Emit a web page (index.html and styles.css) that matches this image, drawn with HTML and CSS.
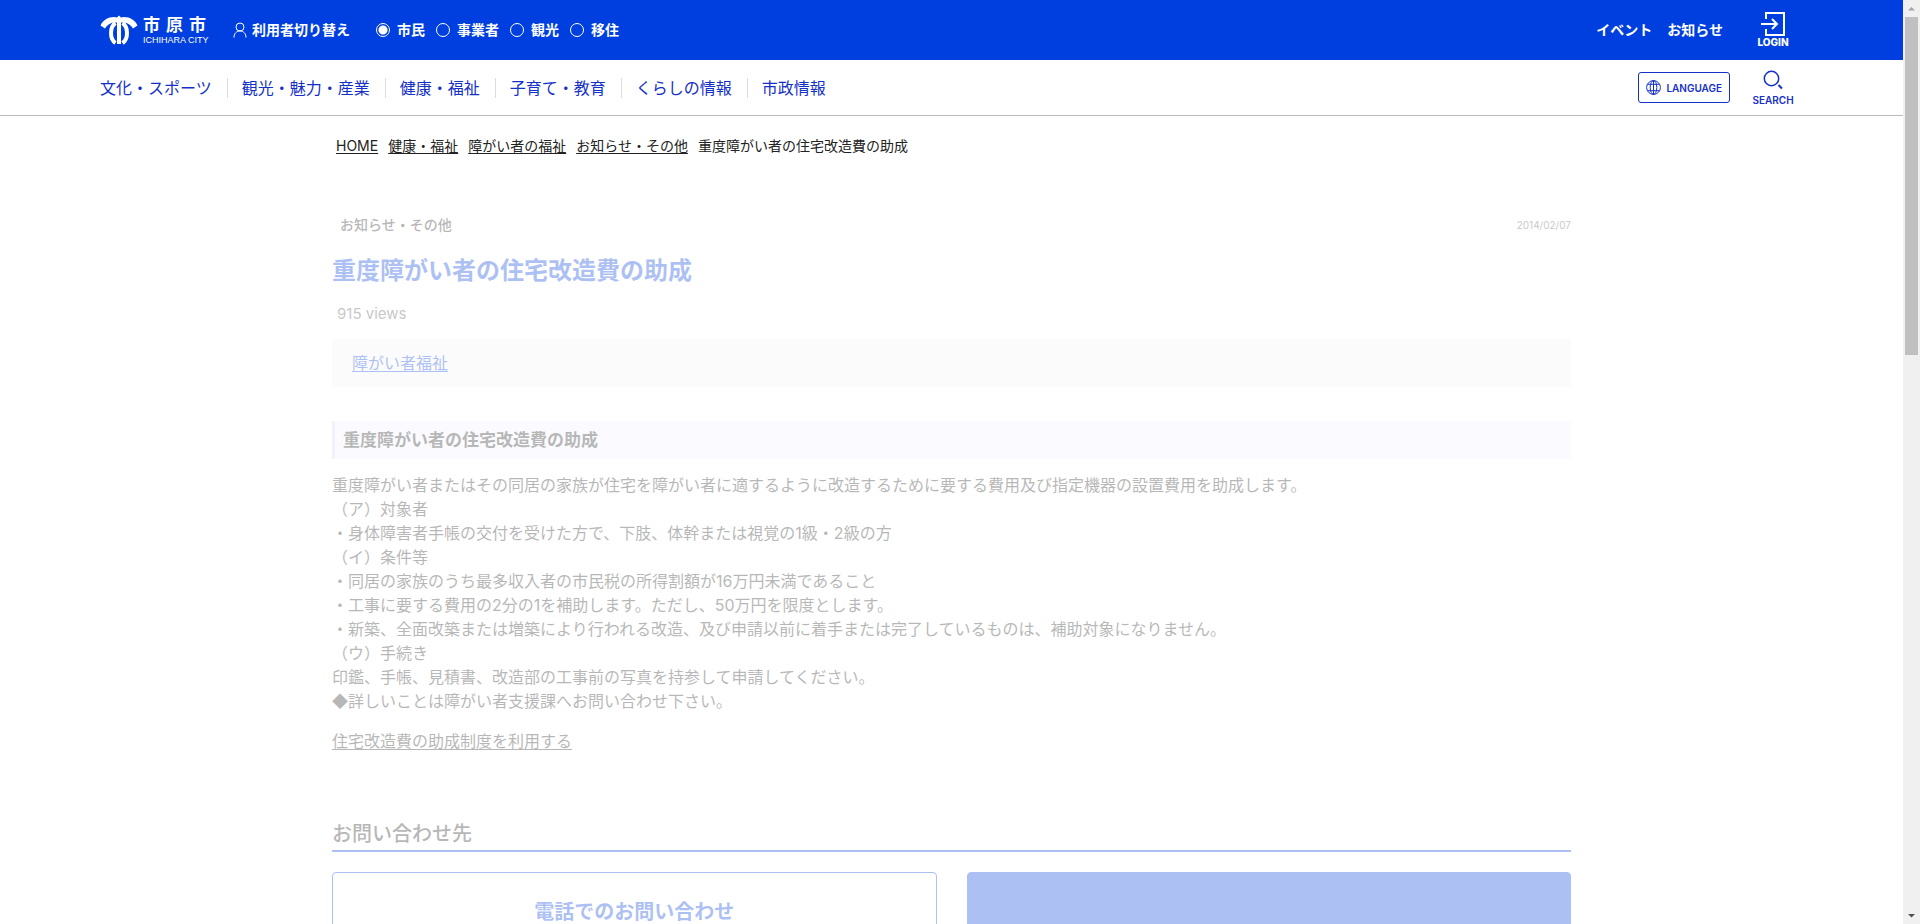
FILE: index.html
```html
<!DOCTYPE html>
<html lang="ja">
<head>
<meta charset="utf-8">
<meta name="viewport" content="width=device-width, initial-scale=1">
<title>重度障がい者の住宅改造費の助成</title>
<link rel="stylesheet" href="styles.css">
</head>
<body>
<header>
  <div class="topbar">
    <a class="logo" href="#">
      <svg class="logo-mark" viewBox="0 0 38 30" aria-hidden="true">
        <path d="M0.500 10.500C3 5 8 2 14 2l3 .5L19 .5l2 2L24 2c6 0 11 3 13.500 8.500l-4.500 3C31 10 28 8 24.500 7.500h-11C10 8 7 10 5 13.500z" fill="#fff"/>
        <path d="M15.500 8C9.500 12 9.500 24 15.500 28M22.500 8c6 4 6 16 0 20" fill="none" stroke="#fff" stroke-width="4"/>
        <path d="M17 5h4v24h-4z" fill="#fff"/>
      </svg>
      <span class="logo-text">
        <span class="logo-ja"><span>市</span><span>原</span><span>市</span></span>
        <span class="logo-en">ICHIHARA CITY</span>
      </span>
    </a>
    <form class="switcher">
      <span class="switcher-title">
        <svg class="user-icon" viewBox="0 0 14 16" aria-hidden="true"><circle cx="7" cy="5" r="4"/><path d="M1 15.500C1 11.500 3.500 9 7 9s6 2.500 6 6.500"/></svg>
        利用者切り替え
      </span>
      <span class="options">
        <label><input type="radio" name="user" checked>市民</label>
        <label><input type="radio" name="user">事業者</label>
        <label><input type="radio" name="user">観光</label>
        <label><input type="radio" name="user">移住</label>
      </span>
    </form>
    <div class="top-links">
      <a href="#">イベント</a>
      <a href="#">お知らせ</a>
    </div>
    <a class="tool login" href="#">
      <svg class="login-icon" viewBox="0 0 24 24" aria-hidden="true"><path d="M5 7V1h18v22H5v-6M0 12h16M11 7l5 5-5 5"/></svg>
      LOGIN
    </a>
  </div>
  <div class="navbar">
    <nav class="menu">
      <a href="#">文化・スポーツ</a>
      <a href="#">観光・魅力・産業</a>
      <a href="#">健康・福祉</a>
      <a href="#">子育て・教育</a>
      <a href="#">くらしの情報</a>
      <a href="#">市政情報</a>
    </nav>
    <button class="language" type="button">
      <svg class="globe-icon" viewBox="0 0 15 15" aria-hidden="true"><circle cx="7.500" cy="7.500" r="6.900"/><ellipse cx="7.500" cy="7.500" rx="3.300" ry="6.900"/><path d="M7.500.5v14M1.500 4.300h12M1.500 10.700h12"/></svg>
      LANGUAGE
    </button>
    <button class="tool search" type="button">
      <svg class="search-icon" viewBox="0 0 20 20" aria-hidden="true"><circle cx="8.500" cy="8.500" r="7.200"/><path d="M15.500 15l3.500 3.500" stroke-width="2"/></svg>
      SEARCH
    </button>
  </div>
</header>
<div class="container">
  <nav class="breadcrumb">
    <a href="#">HOME</a>
    <a href="#">健康・福祉</a>
    <a href="#">障がい者の福祉</a>
    <a href="#">お知らせ・その他</a>
    <span>重度障がい者の住宅改造費の助成</span>
  </nav>
  <main class="article">
    <div class="meta"><span class="category">お知らせ・その他</span><time datetime="2014-02-07">2014/02/07</time></div>
    <h1>重度障がい者の住宅改造費の助成</h1>
    <p class="views">915 views</p>
    <div class="tags"><a href="#">障がい者福祉</a></div>
    <h2>重度障がい者の住宅改造費の助成</h2>
    <p class="body-text">重度障がい者またはその同居の家族が住宅を障がい者に適するように改造するために要する費用及び指定機器の設置費用を助成します。<br>
（ア）対象者<br>
・身体障害者手帳の交付を受けた方で、下肢、体幹または視覚の1級・2級の方<br>
（イ）条件等<br>
・同居の家族のうち最多収入者の市民税の所得割額が16万円未満であること<br>
・工事に要する費用の2分の1を補助します。ただし、50万円を限度とします。<br>
・新築、全面改築または増築により行われる改造、及び申請以前に着手または完了しているものは、補助対象になりません。<br>
（ウ）手続き<br>
印鑑、手帳、見積書、改造部の工事前の写真を持参して申請してください。<br>
<span class="mark">◆</span>詳しいことは障がい者支援課へお問い合わせ下さい。</p>
    <p class="body-text"><a href="#">住宅改造費の助成制度を利用する</a></p>
    <h3>お問い合わせ先</h3>
    <div class="contacts">
      <section class="card"><h4>電話でのお問い合わせ</h4></section>
      <section class="card card-filled"></section>
    </div>
  </main>
</div>
<div class="scrollbar" aria-hidden="true">
  <svg viewBox="0 0 17 17"><path d="M5 10.500h7L8.500 7z" fill="#a3a3a3"/></svg>
  <div class="track"><div class="thumb"></div></div>
  <svg viewBox="0 0 17 17"><path d="M5 7h7l-3.500 3.500z" fill="#505050"/></svg>
</div>
</body>
</html>
```
FILE: styles.css
```css
* { box-sizing: border-box; }
html { overflow: hidden; }
body {
  margin: 0;
  padding-right: 17px;
  background: #fff;
  color: #222;
  font: 16px/24px Inter, "Noto Sans CJK JP", sans-serif;
}
h1, h2, h3, h4, p { margin: 0; }
button { border: 0; background: none; padding: 0; font-family: inherit; cursor: pointer; }
svg { flex: none; }

.topbar, .navbar { display: flex; align-items: center; padding: 0 100px; }
.topbar { height: 60px; background: #003fdf; color: #fff; font-size: 14px; font-weight: 700; }
.topbar a { color: #fff; text-decoration: none; }
.logo { display: flex; align-items: center; gap: 5px; }
.logo-mark { width: 38px; height: 30px; }
.logo-text { width: 63px; }
.logo-ja { display: flex; justify-content: space-between; font-size: 17px; line-height: 20px; }
.logo-en { display: block; font: 9px/10px "Liberation Sans", sans-serif; white-space: nowrap; }
.switcher { display: flex; align-items: center; gap: 26px; margin-left: 27px; }
.switcher-title { display: flex; align-items: center; gap: 5px; }
.user-icon { width: 14px; height: 16px; fill: none; stroke: #fff; }
.options { display: flex; gap: 11px; }
.options label { display: flex; align-items: center; gap: 7px; }
.options input {
  appearance: none;
  width: 14px;
  height: 14px;
  margin: 0;
  border: 1px solid #fff;
  border-radius: 50%;
}
.options input:checked { background: radial-gradient(circle, #fff 4px, transparent 5px); }
.top-links { display: flex; gap: 15px; margin: 0 20px 0 auto; }
.tool {
  display: flex;
  flex-direction: column;
  align-items: center;
  width: 60px;
  font-size: 10px;
  line-height: 12px;
}
.login { font-weight: 800; }
.login-icon { width: 24px; height: 24px; fill: none; stroke: #fff; stroke-width: 2; }

.navbar { height: 56px; border-bottom: 1px solid #bbb; }
.menu { display: flex; }
.menu a { padding: 0 15px 0 14px; color: #1430c8; line-height: 20px; text-decoration: none; }
.menu a:first-child { padding-left: 0; }
.menu a + a { border-left: 1px solid #ddd; }
.language {
  display: flex;
  align-items: center;
  gap: 5px;
  height: 31px;
  margin: 0 13px 0 auto;
  padding: 0 7px;
  border: 1px solid #1430c8;
  border-radius: 3px;
  color: #1430c8;
  font-size: 10px;
  font-weight: 600;
}
.globe-icon { width: 15px; height: 15px; fill: none; stroke: #1430c8; }
.search { gap: 4px; color: #1430c8; font-weight: 600; }
.search-icon { width: 20px; height: 20px; fill: none; stroke: #1430c8; stroke-width: 1.5; }

.container { max-width: 1239px; margin: 0 auto; }
.breadcrumb { display: flex; gap: 10px; padding: 18px 4px 0; font-size: 14px; }
.breadcrumb a { color: inherit; text-underline-offset: 2px; }
.article { padding-top: 55px; opacity: .32; }
.article a { text-underline-offset: 2px; }
.meta { display: flex; justify-content: space-between; padding-left: 8px; font-size: 14px; }
.category { font-weight: 500; }
time { color: #555; font-size: 10px; }
h1 { margin-top: 16px; color: #003fdf; font-size: 24px; font-weight: 700; line-height: 36px; }
.views { margin-top: 13px; padding-left: 5px; color: #555; font-size: 15px; }
.tags { margin-top: 13px; padding: 12px 20px; background: #f5f5f5; }
.tags a { color: #003fdf; }
h2 {
  margin: 34px 0 14px;
  padding: 7px 8px;
  border-left: 3px solid #d8d8ff;
  background: #f3f3ff;
  font-size: 17px;
  font-weight: 700;
  line-height: 24px;
}
.body-text { margin-bottom: 16px; }
.body-text a { color: inherit; }
.mark { font-family: "Noto Sans CJK JP", sans-serif; line-height: 1; }
h3 {
  margin-top: 66px;
  padding-bottom: 1px;
  border-bottom: 2px solid #003fdf;
  font-size: 20px;
  font-weight: 500;
  line-height: 30px;
}
.contacts { display: grid; grid-template-columns: 1fr 1fr; gap: 30px; margin-top: 20px; }
.card { min-height: 160px; padding: 24px; border: 1px solid #003fdf; border-radius: 4px; text-align: center; }
.card-filled { background: #003fdf; }
h4 { color: #003fdf; font-size: 20px; line-height: 30px; }

.scrollbar {
  position: fixed;
  inset: 0 0 0 auto;
  display: flex;
  flex-direction: column;
  width: 17px;
  background: #f0f0f0;
}
.scrollbar svg { width: 17px; height: 17px; }
.track { flex: 1; padding: 0 2px; }
.thumb { height: 38%; background: #c0c0c0; }
```
